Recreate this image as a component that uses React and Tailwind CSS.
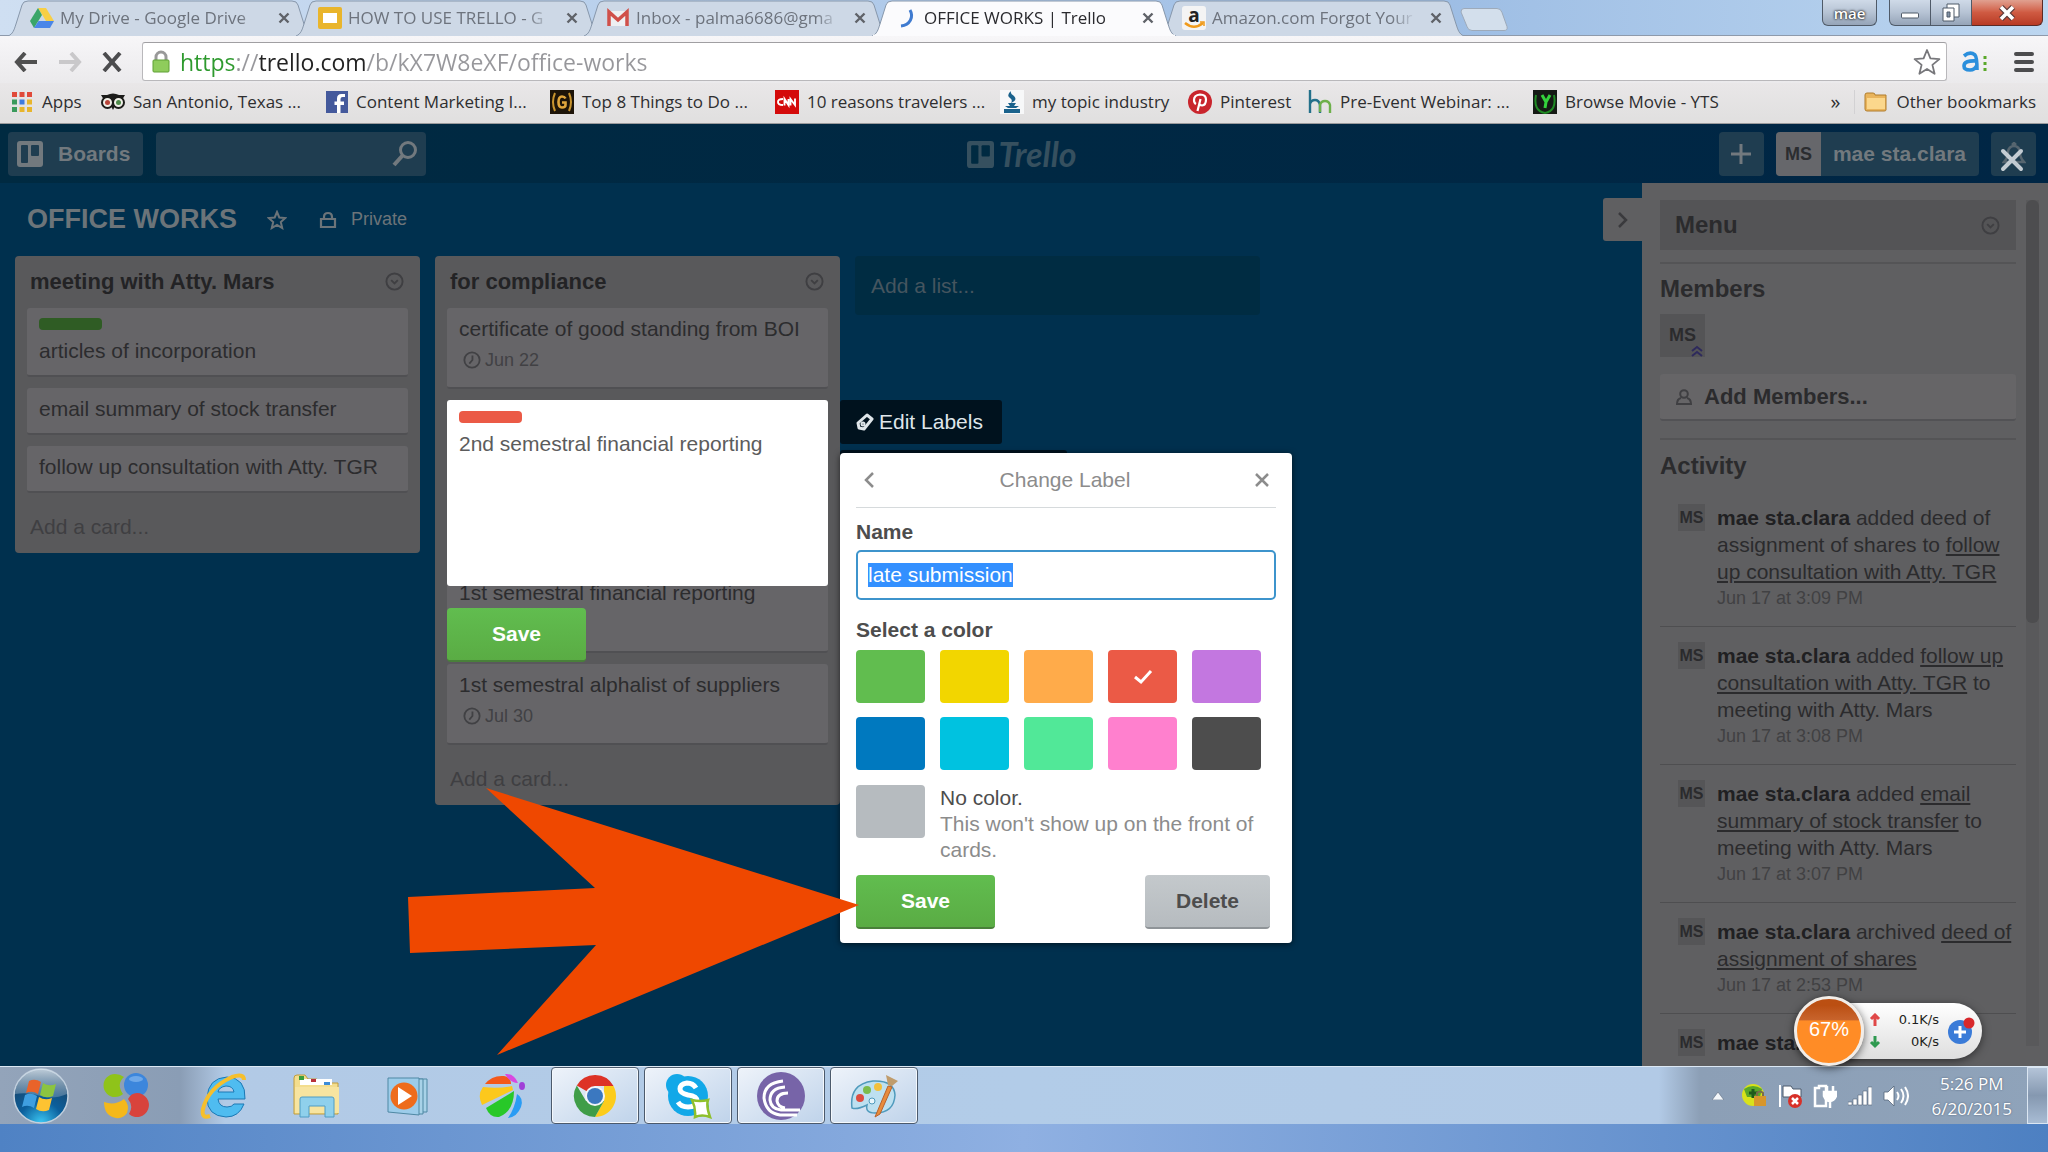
import React, { useEffect, useRef } from "react";

const uiFont = "font-['Open_Sans','Noto_Sans',sans-serif]";
const boardFont = "font-['Liberation_Sans',Arial,sans-serif]";

/* ---------- browser tab strip ---------- */

function DriveIcon() {
  return (
    <svg viewBox="0 0 24 24" className="size-6">
      <path d="M8 2h8l8 13h-8z" fill="#f8cf45" />
      <path d="M8 2l4 7-8 13-4-7z" fill="#3aa569" />
      <path d="M8.500 15H24l-4 7H4z" fill="#4a86e8" />
    </svg>
  );
}
function SlidesIcon() {
  return (
    <svg viewBox="0 0 24 24" className="size-6">
      <rect x="0" y="1" width="24" height="22" rx="2" fill="#e9b52c" />
      <rect x="5" y="7" width="14" height="10" fill="#fff" />
    </svg>
  );
}
function GmailIcon() {
  return (
    <svg viewBox="0 0 24 24" className="size-6">
      <path d="M2 5h20v15H2z" fill="#eef0f3" />
      <path d="M3 20V6l9 8 9-8v14" fill="none" stroke="#d0504a" strokeWidth="3.500" />
    </svg>
  );
}
function SpinnerIcon() {
  return (
    <svg viewBox="0 0 24 24" className="size-6">
      <path d="M16 4c4 7 0 15-9 16" fill="none" stroke="#3f7bd0" strokeWidth="3" />
    </svg>
  );
}
function AmazonIcon() {
  return (
    <svg viewBox="0 0 24 24" className="size-6">
      <rect width="24" height="24" rx="3" fill="#f4f4f4" />
      <text x="12" y="16" textAnchor="middle" fontSize="19" fontWeight="700" fontFamily="Open Sans, sans-serif" fill="#222">a</text>
      <path d="M3 17c6 5 12 5 18 0" fill="none" stroke="#f09a1a" strokeWidth="2.500" />
      <path d="M18 16h4v4" fill="none" stroke="#f09a1a" strokeWidth="1.500" />
    </svg>
  );
}

const tabs = [
  { title: "My Drive - Google Drive", Icon: DriveIcon },
  { title: "HOW TO USE TRELLO - G", Icon: SlidesIcon },
  { title: "Inbox - palma6686@gma", Icon: GmailIcon },
  { title: "OFFICE WORKS | Trello", Icon: SpinnerIcon, active: true },
  { title: "Amazon.com Forgot Your", Icon: AmazonIcon },
];

function Tab({ title, Icon, active }) {
  return (
    <div className={`relative -mr-4 flex h-9 w-[304px] shrink items-center pl-[22px] pr-[18px] ${active ? "z-10" : ""}`}>
      <svg className="absolute inset-0 size-full" viewBox="0 0 304 36" preserveAspectRatio="none" aria-hidden="true">
        <path
          d="M0 36C5 34 6 30 8 24L14 5Q15 1 20 1H284Q289 1 290 5L296 24C298 30 299 34 304 36"
          fill={active ? "#fbfbfd" : "#cdd8e6"}
          stroke="#8797ab"
        />
        {active && <path d="M1 36H303" stroke="#fbfbfd" strokeWidth="3" />}
      </svg>
      <span className="relative shrink-0"><Icon /></span>
      <span
        className={`relative ml-[6px] w-[204px] overflow-hidden whitespace-nowrap text-[17px] leading-6 [mask-image:linear-gradient(to_right,black_88%,transparent)] ${
          active ? "text-[#2a2a2e]" : "text-[#6d737d]"
        }`}
      >
        {title}
      </span>
      <button aria-label="Close tab" className="relative ml-auto p-1">
        <svg viewBox="0 0 12 12" className="size-3">
          <path d="M1.500 1.500l9 9M10.500 1.500l-9 9" stroke="#5f6268" strokeWidth="2.400" />
        </svg>
      </button>
    </div>
  );
}

function WindowControls() {
  const glass = "flex items-center justify-center border border-t-0 border-[#4f5a68] bg-linear-to-b from-[#cfdae8] via-[#b6c3d4] to-[#95a4b8]";
  return (
    <div className="ml-auto flex h-[26px] pr-[5px]">
      <button className={`${glass} mr-3 w-[55px] rounded-b-md text-[15px] font-semibold leading-5 text-white [text-shadow:0_0_3px_#222,0_0_2px_#222]`}>mae</button>
      <button aria-label="Minimize" className={`${glass} w-[42px] rounded-bl-md`}>
        <svg viewBox="0 0 20 20" className="size-5"><rect x="1.500" y="10" width="17" height="5" rx="1" fill="#fff" stroke="#4f5a68" /></svg>
      </button>
      <button aria-label="Restore" className={`${glass} w-[41px] border-l-0`}>
        <svg viewBox="0 0 20 20" className="size-5" fill="#fff" stroke="#4f5a68">
          <path d="M6 1h12v13H6z" /><path d="M2 5h11v13H2z" /><path d="M6 9h3v5H6z" fill="#8494a8" />
        </svg>
      </button>
      <button aria-label="Close" className="flex w-[71px] items-center justify-center rounded-br-md border border-l-0 border-t-0 border-[#5a2a26] bg-linear-to-b from-[#e0a090] via-[#cf5a42] to-[#b83a24]">
        <svg viewBox="0 0 20 20" className="size-5">
          <path d="M4 4l12 12M16 4L4 16" stroke="#5a3a3a" strokeWidth="6" /><path d="M4 4l12 12M16 4L4 16" stroke="#fff" strokeWidth="3.600" />
        </svg>
      </button>
    </div>
  );
}

function TabStrip() {
  return (
    <div className="flex h-9 shrink-0 border-b border-[#8e9aab] bg-linear-to-r from-[#cfdff2] via-[#9dbde4] via-70% to-[#bcd6f0] pl-[8px]">
      {tabs.map((t) => <Tab key={t.title} {...t} />)}
      <button aria-label="New tab" className="ml-3 mt-2 h-[23px] w-[50px] shrink-0">
        <svg viewBox="0 0 50 23" className="size-full">
          <path d="M4 .5H37q4 0 5 4l5 14q1 4-3 4H12q-4 0-5-4L1 4Q1 .5 4 .5z" fill="#d3dfec" stroke="#9daaba" />
        </svg>
      </button>
      <WindowControls />
    </div>
  );
}

/* ---------- toolbar and bookmarks ---------- */

function Toolbar() {
  return (
    <div className="flex h-[47px] shrink-0 items-center bg-linear-to-b from-[#f7f6f8] to-[#ebeaec] pt-1">
      <div className="flex w-[142px] items-center gap-5 pl-[14px]">
        <button aria-label="Back">
          <svg viewBox="0 0 24 20" className="h-5 w-6" fill="none" stroke="#505050" strokeWidth="4"><path d="M11 1L3 10l8 9M3 10h20" /></svg>
        </button>
        <button aria-label="Forward">
          <svg viewBox="0 0 24 20" className="h-5 w-6" fill="none" stroke="#c9c8ca" strokeWidth="4"><path d="M13 1l8 9-8 9M21 10H1" /></svg>
        </button>
        <button aria-label="Stop">
          <svg viewBox="0 0 20 20" className="size-5" stroke="#4c4c4e" strokeWidth="4"><path d="M2 1l16 18M18 1L2 19" /></svg>
        </button>
      </div>
      <div className="flex h-[39px] flex-1 items-center rounded-[3px] border border-[#b9b8bb] border-t-[#a09fa2] bg-white pl-[9px] pr-[5px]">
        <svg viewBox="0 0 18 24" className="h-6 w-[18px]">
          <path d="M4 12V7a5 5 0 0 1 10 0v5" fill="none" stroke="#999" strokeWidth="3" />
          <rect x="1" y="10" width="16" height="12" rx="1" fill="#8fcc5c" stroke="#5fa035" />
        </svg>
        <input
          aria-label="Address"
          defaultValue="https://trello.com/b/kX7W8eXF/office-works"
          className="ml-[10px] flex-1 bg-[linear-gradient(to_right,#2e9a2e_55px,#97979b_55px,#97979b_79px,#222_79px,#222_187px,#97979b_187px)] bg-clip-text text-[23px] leading-8 text-transparent outline-none"
        />
        <button aria-label="Bookmark this page">
          <svg viewBox="0 0 28 28" className="size-7" fill="#fff" stroke="#77777b" strokeWidth="1.800" strokeLinejoin="round">
            <path d="M14 2l3.400 8.400 9 .7-7 5.800 2.200 8.900L14 21l-7.600 4.800 2.200-8.900-7-5.800 9-.7z" />
          </svg>
        </button>
      </div>
      <button aria-label="Extension" className="ml-[14px]">
        <svg viewBox="0 0 28 24" className="h-6 w-7">
          <path d="M3 6q6-5 11-1 2 2 2 15M16 11q-13-1-13 5 0 4 6 4 5 0 7-5" fill="none" stroke="#2b8fdc" strokeWidth="3.600" />
          <path d="M24 6v3M24 12v3M24 18v3" stroke="#5aa82a" strokeWidth="3" />
        </svg>
      </button>
      <button aria-label="Chrome menu" className="ml-[25px] mr-[14px]">
        <svg viewBox="0 0 20 20" className="size-5" stroke="#4c4c4e" strokeWidth="4" strokeLinecap="round"><path d="M2 2h16M2 10h16M2 18h16" /></svg>
      </button>
    </div>
  );
}

function AppsIcon() {
  const rows = [["#e04a3a", "#e04a3a", "#e04a3a"], ["#3a9a5c", "#3f7be0", "#e8b52c"], ["#3a9a5c", "#e8b52c", "#e8b52c"]];
  return (
    <svg viewBox="0 0 20 20" className="size-5">
      {rows.map((r, y) => r.map((c, x) => <rect key={`${x}${y}`} x={x * 7.500} y={y * 7.500} width="5" height="5" fill={c} />))}
    </svg>
  );
}
function OwlIcon() {
  return (
    <svg viewBox="0 0 24 20" className="h-5 w-6">
      <path d="M0 3h6q6-3 12 0h6l-3 5H3z" fill="#1c1c1a" />
      <circle cx="6.500" cy="10.500" r="5.500" fill="#f0efe8" stroke="#1c1c1a" strokeWidth="2" />
      <circle cx="17.500" cy="10.500" r="5.500" fill="#f0efe8" stroke="#1c1c1a" strokeWidth="2" />
      <circle cx="6.500" cy="10.500" r="2.500" fill="#b8443a" /><circle cx="17.500" cy="10.500" r="2.500" fill="#4d8a4a" />
      <path d="M10 14l2 4 2-4z" fill="#1c1c1a" />
    </svg>
  );
}
function FacebookIcon() {
  return (
    <svg viewBox="0 0 22 22" className="size-[22px]">
      <rect width="22" height="22" fill="#44599c" />
      <path d="M14.500 22v-8h3.500V10.500h-3.500V8q0-2 2-2H19V3h-3.500Q11 3 11 7.500v3H8.500V14H11v8z" fill="#fff" />
    </svg>
  );
}
function GIcon() {
  return (
    <svg viewBox="0 0 24 24" className="size-6">
      <rect width="24" height="24" fill="#1d1408" />
      <path d="M5 3q-4 9 0 18M19 3q4 9 0 18" fill="none" stroke="#c8942e" strokeWidth="2" />
      <path d="M15.500 8.500q-1-2-3.500-2-3.500 0-3.500 5.500t3.500 5.500q3.500 0 3.500-2.500V12.500H12" fill="none" stroke="#e0a63c" strokeWidth="2.600" />
    </svg>
  );
}
function CnnIcon() {
  return (
    <svg viewBox="0 0 24 24" className="size-6">
      <rect width="24" height="24" fill="#d40a0a" />
      <path d="M8 9q-5 0-5 3t5 3M9.500 15.500V9l4 6V9M15.500 15.500V9l4.500 6V8.500" fill="none" stroke="#fff" strokeWidth="1.900" />
    </svg>
  );
}
function BbbIcon() {
  return (
    <svg viewBox="0 0 24 24" className="size-6">
      <rect width="24" height="24" fill="#f7f8f9" />
      <path d="M11 1q-5 4-1 7 3 2 1 5 7-3 3-7-4-2-3-5zM8 13h8l-2 3h-4zM5 16h14l-3 2H8zM4 19h16v4H4z" fill="#1a628c" />
    </svg>
  );
}
function PinterestIcon() {
  return (
    <svg viewBox="0 0 24 24" className="size-6">
      <circle cx="12" cy="12" r="12" fill="#c9252d" />
      <path d="M8 14q-2-1-2-4 0-5 6-5.500 6 0 6 5 0 5.500-4 6-2 0-3-2M12.500 9L9.500 21" fill="none" stroke="#fff" strokeWidth="2.200" />
    </svg>
  );
}
function HnIcon() {
  return (
    <svg viewBox="0 0 24 24" className="size-6" fill="none" strokeWidth="2.400">
      <path d="M2 0v23M2 14q1-4 5-4t5 5v8" stroke="#23708a" /><path d="M12 22v-7q1-4 5-4t5 4v8" stroke="#6db04a" />
    </svg>
  );
}
function YtsIcon() {
  return (
    <svg viewBox="0 0 24 24" className="size-6">
      <rect width="24" height="24" fill="#151a15" />
      <path d="M3 5q-3 16 9 18 12-2 9-18" fill="none" stroke="#1f8a24" strokeWidth="2" />
      <path d="M9 5l4 7 4-7M13 12l-1 6" fill="none" stroke="#33d23c" strokeWidth="3" />
    </svg>
  );
}

const bookmarks = [
  { label: "Apps", Icon: AppsIcon, width: "w-[89px]", gap: "gap-[10px]" },
  { label: "San Antonio, Texas ...", Icon: OwlIcon, width: "w-[225px]", gap: "gap-2" },
  { label: "Content Marketing I...", Icon: FacebookIcon, width: "w-[224px]", gap: "gap-2" },
  { label: "Top 8 Things to Do ...", Icon: GIcon, width: "w-[225px]", gap: "gap-2" },
  { label: "10 reasons travelers ...", Icon: CnnIcon, width: "w-[225px]", gap: "gap-2" },
  { label: "my topic industry", Icon: BbbIcon, width: "w-[188px]", gap: "gap-2" },
  { label: "Pinterest", Icon: PinterestIcon, width: "w-[120px]", gap: "gap-2" },
  { label: "Pre-Event Webinar: ...", Icon: HnIcon, width: "w-[225px]", gap: "gap-2" },
  { label: "Browse Movie - YTS", Icon: YtsIcon, width: "w-[200px]", gap: "gap-2" },
];

function BookmarksBar() {
  return (
    <div className="flex h-[41px] shrink-0 items-center border-b border-[#9a9a9c] bg-linear-to-b from-[#e9e7e8] to-[#e0dfdf] pb-[2px] pl-3 text-[17px] leading-6 text-[#2e2e30]">
      {bookmarks.map(({ label, Icon, width, gap }) => (
        <a key={label} href="#" className={`flex items-center whitespace-nowrap ${width} ${gap}`}>
          <span className="shrink-0"><Icon /></span>
          {label}
        </a>
      ))}
      <button aria-label="More bookmarks" className="ml-auto mr-[14px] text-[20px] leading-6">»</button>
      <a href="#" className="flex items-center gap-2 whitespace-nowrap border-l border-[#d2d1d3] pl-[9px] pr-3">
        <svg viewBox="0 0 24 20" className="h-5 w-6">
          <path d="M1 3q0-2 2-2h6q2 0 2 2h11v15q0 1-2 1H3q-2 0-2-2z" fill="#e9b45c" stroke="#b07d2c" />
          <path d="M3 6h18v11H3z" fill="#fbd78c" />
        </svg>
        Other bookmarks
      </a>
    </div>
  );
}

/* ---------- Trello ---------- */

function BoardGlyph({ className, hole }) {
  return (
    <svg viewBox="0 0 26 26" className={className}>
      <rect width="26" height="26" rx="3" fill="currentColor" />
      <rect x="4" y="4" width="7" height="18" rx="1" fill={hole} />
      <rect x="14" y="4" width="8" height="11" rx="1" fill={hole} />
    </svg>
  );
}

function TrelloHeader() {
  const box = "h-11 rounded-sm bg-[#1f3d50]";
  return (
    <header className={`relative flex h-[59px] shrink-0 items-start bg-linear-to-r from-[#002a41] to-[#002645] px-2 pr-3 pt-2 text-[#72797e] ${boardFont}`}>
      <div className="flex flex-1">
        <button className={`${box} flex w-[135px] items-center gap-[15px] pl-[9px] text-[21px] font-bold`}>
          <BoardGlyph className="size-[26px]" hole="#1f3d50" />
          Boards
        </button>
        <label className={`${box} ml-[13px] flex w-[270px] items-center pr-2`}>
          <input aria-label="Search" className="min-w-0 flex-1 bg-transparent pl-2 outline-none" />
          <svg viewBox="0 0 26 26" className="size-[26px]" fill="none" stroke="currentColor">
            <circle cx="16" cy="9" r="7.500" strokeWidth="3" /><path d="M11 14L2 24" strokeWidth="4" />
          </svg>
        </label>
      </div>
      <a href="#" className="flex h-11 items-center gap-1 text-[#36505f]">
        <BoardGlyph className="size-[27px]" hole="#002a41" />
        <span className="font-['Lato',sans-serif] text-[34px] font-bold italic leading-9">Trello</span>
      </a>
      <div className="flex flex-1 justify-end">
        <button aria-label="Create" className={`${box} mr-3 flex w-[45px] items-center justify-center`}>
          <svg viewBox="0 0 22 22" className="size-[22px]" stroke="currentColor" strokeWidth="3"><path d="M11 1v20M1 11h20" /></svg>
        </button>
        <button className={`${box} mr-3 flex items-center overflow-hidden pr-[13px] text-[21px] font-bold`}>
          <span className="mr-[12px] flex h-11 w-[45px] items-center justify-center bg-[#66676b] text-[18px] text-[#2b2d30]">MS</span>
          mae sta.clara
        </button>
        <button aria-label="Notifications" className={`${box} flex w-[45px] items-center justify-center`}>
          <svg viewBox="0 0 24 24" className="size-6" fill="none" stroke="#56656f" strokeWidth="2.500"><path d="M2 20q4-4 4-10a6 6 0 0 1 12 0q0 6 4 10zM10 3l2-2 2 2" /></svg>
        </button>
      </div>
      <button aria-label="Close editor" className="absolute right-[24px] top-6">
        <svg viewBox="0 0 24 24" className="size-6" stroke="#c3cbd2" strokeWidth="4" strokeLinecap="round"><path d="M3 3l18 18M21 3L3 21" /></svg>
      </button>
    </header>
  );
}

function ChevronCircle() {
  return (
    <svg viewBox="0 0 20 20" className="size-[19px]" fill="none" stroke="#3f3f42" strokeWidth="2">
      <circle cx="10" cy="10" r="8.500" /><path d="M6.500 8.500L10 12l3.500-3.500" />
    </svg>
  );
}

function Card({ title, label, date, children }) {
  return (
    <article className="rounded-[3px] border-b-2 border-[#505053] bg-[#666568] px-3 pb-[11px] pt-[7px] text-[21px] leading-[27px] text-[#2c2c2e]">
      {label && <div className={`mb-[7px] mt-[3px] h-3 w-[63px] rounded ${label}`} />}
      <div className="whitespace-nowrap">{title}</div>
      {date && (
        <div className="flex h-[34px] items-center gap-1 pl-1 pt-[2px] text-[18px] text-[#414144]">
          <svg viewBox="0 0 20 20" className="size-[18px]" fill="none" stroke="currentColor" strokeWidth="2">
            <circle cx="10" cy="10" r="8.500" /><path d="M10.500 5v5L7 14" />
          </svg>
          {date}
        </div>
      )}
      {children}
    </article>
  );
}

function List({ name, children }) {
  return (
    <section className="w-[405px] shrink-0 rounded-[4px] bg-[#59595b] px-3">
      <h2 className="flex h-[52px] items-center justify-between pb-[2px] pl-[3px] pr-1 text-[22px] font-bold text-[#232325]">
        {name}
        <button aria-label={`${name} list menu`}><ChevronCircle /></button>
      </h2>
      <div className="flex flex-col gap-[11px]">{children}</div>
      <button className="flex h-[60px] items-center pl-[3px] pt-2 text-[21px] text-[#3f3f42]">Add a card...</button>
    </section>
  );
}

const greenButton = "rounded-[4px] border-b-2 border-[#49803a] bg-linear-to-b from-[#61bd4f] to-[#5aac44] text-[21px] font-bold text-white";

const swatches = [
  ["Green", "bg-[#61bd4f]"], ["Yellow", "bg-[#f2d600]"], ["Orange", "bg-[#ffab4a]"], ["Red", "bg-[#eb5a46]"], ["Purple", "bg-[#c377e0]"],
  ["Blue", "bg-[#0079bf]"], ["Sky", "bg-[#00c2e0]"], ["Lime", "bg-[#51e898]"], ["Pink", "bg-[#ff80ce]"], ["Black", "bg-[#4d4d4d]"],
];

function ChangeLabel() {
  const input = useRef(null);
  useEffect(() => {
    input.current.focus();
    input.current.select();
  }, []);
  return (
    <div role="dialog" aria-label="Change Label" className="absolute left-[393px] top-[53px] z-20 w-[452px] rounded-[4px] bg-white px-4 pb-[14px] text-[21px] leading-[26px] text-[#4d4d4d] shadow-[0_1px_6px_rgba(0,0,0,0.6)]">
      <div className="flex h-[55px] items-center justify-between border-b border-[#d6dadc] px-[7px] text-[#8c8c8c]">
        <button aria-label="Back">
          <svg viewBox="0 0 12 16" className="h-4 w-3" fill="none" stroke="currentColor" strokeWidth="2.500"><path d="M10 1L3 8l7 7" /></svg>
        </button>
        <span>Change Label</span>
        <button aria-label="Close">
          <svg viewBox="0 0 14 14" className="size-[14px]" stroke="currentColor" strokeWidth="2.500"><path d="M1 1l12 12M13 1L1 13" /></svg>
        </button>
      </div>
      <label htmlFor="label-name" className="mt-[11px] block font-bold">Name</label>
      <input
        id="label-name"
        ref={input}
        defaultValue="late submission"
        className="mt-[5px] block h-[50px] w-full rounded-[5px] border-2 border-[#3d94cc] px-[10px] text-[21px] outline-none selection:bg-[#3390ff] selection:text-white"
      />
      <div className="mb-[7px] mt-[17px] font-bold">Select a color</div>
      <div className="grid w-[405px] grid-cols-5 gap-x-[15px] gap-y-[14px]">
        {swatches.map(([name, color]) => (
          <button key={name} aria-label={name} aria-pressed={name === "Red"} className={`flex h-[53px] items-center justify-center rounded-[4px] ${color}`}>
            {name === "Red" && (
              <svg viewBox="0 0 20 16" className="h-4 w-5" fill="none" stroke="#fff" strokeWidth="3"><path d="M2 8l6 5L18 2" /></svg>
            )}
          </button>
        ))}
      </div>
      <div className="mt-[15px] flex gap-[15px]">
        <button aria-label="No color" className="h-[53px] w-[69px] shrink-0 rounded-[4px] bg-[#b6bbbf]" />
        <div>
          <div>No color.</div>
          <div className="text-[#8c8c8c]">This won't show up on the front of cards.</div>
        </div>
      </div>
      <div className="mt-3 flex justify-between pr-[6px]">
        <button className={`h-[54px] w-[139px] ${greenButton}`}>Save</button>
        <button className="h-[54px] w-[125px] rounded-[4px] border-b-2 border-[#8f9498] bg-linear-to-b from-[#c4c9cc] to-[#b6bbbf] text-[21px] font-bold text-[#4d4d4d]">Delete</button>
      </div>
      <svg viewBox="0 0 452 268" className="pointer-events-none absolute -left-[432px] top-[335px] h-[268px] w-[452px]" aria-hidden="true">
        <path d="M451 117L78 0L187 100L0 109L2 165L188 157L89 267z" fill="#ef4800" />
      </svg>
    </div>
  );
}

function QuickEdit() {
  return (
    <div className="relative h-[161px]">
      <div className="absolute inset-x-0 top-0 z-10 h-[186px] rounded-[3px] bg-white px-3 pt-[11px]">
        <div className="h-3 w-[63px] rounded bg-[#eb5a46]" />
        <textarea
          aria-label="Card title"
          defaultValue="2nd semestral financial reporting"
          className="mt-[7px] block h-[140px] w-full resize-none bg-transparent text-[21px] leading-[27px] text-[#5c5c5c] outline-none"
        />
      </div>
      <button className={`absolute left-0 top-[208px] z-10 h-[54px] w-[139px] ${greenButton}`}>Save</button>
      <button className="absolute left-[393px] top-0 z-10 flex h-11 w-[162px] items-center gap-[5px] rounded-[3px] bg-[#00121e] pl-4 text-[21px] text-[#dfe6ea]">
        <svg viewBox="0 0 18 18" className="size-[18px]" fill="none" stroke="currentColor" strokeWidth="3"><path d="M2 10L11 2l5 4-8 10-5-1z" strokeLinejoin="round" /><circle cx="7" cy="11" r="1" /></svg>
        Edit Labels
      </button>
      <div className="absolute left-[393px] top-[50px] h-11 w-[227px] rounded-[3px] bg-[#00121e]" />
      <ChangeLabel />
    </div>
  );
}

function Board() {
  return (
    <div className="min-w-0 flex-1">
      <div className="flex h-[73px] items-center pl-[27px] text-[#6c7479]">
        <h1 className="text-[27px] font-bold">OFFICE WORKS</h1>
        <button aria-label="Star board" className="ml-[30px]">
          <svg viewBox="0 0 20 20" className="size-5" fill="none" stroke="currentColor" strokeWidth="2"><path d="M10 2l2.300 5.500 6 .5-4.500 4 1.400 6L10 14.800 4.800 18l1.400-6L1.700 8l6-.5z" /></svg>
        </button>
        <button className="ml-8 flex items-center gap-[14px] text-[18px]">
          <svg viewBox="0 0 18 18" className="size-[18px]" fill="none" stroke="currentColor" strokeWidth="2.200"><path d="M2 8h14v8H2zM5 8V6q0-4 4-4t4 4v2" /></svg>
          Private
        </button>
      </div>
      <div className="flex items-start gap-[15px] pl-[15px]">
        <List name="meeting with Atty. Mars">
          <Card label="bg-[#2f5c24]" title="articles of incorporation" />
          <Card title="email summary of stock transfer" />
          <Card title="follow up consultation with Atty. TGR" />
        </List>
        <List name="for compliance">
          <Card title="certificate of good standing from BOI" date="Jun 22" />
          <QuickEdit />
          <Card title="1st semestral financial reporting"><div className="h-[34px]" /></Card>
          <Card title="1st semestral alphalist of suppliers" date="Jul 30" />
        </List>
        <button className="h-[59px] w-[405px] shrink-0 rounded-[4px] bg-[#002c42] pl-4 text-left text-[21px] text-[#45555f]">Add a list...</button>
      </div>
    </div>
  );
}

const activity = [
  { text: [" added deed of assignment of shares to ", "follow up consultation with Atty. TGR", ""], time: "Jun 17 at 3:09 PM" },
  { text: [" added ", "follow up consultation with Atty. TGR", " to meeting with Atty. Mars"], time: "Jun 17 at 3:08 PM" },
  { text: [" added ", "email summary of stock transfer", " to meeting with Atty. Mars"], time: "Jun 17 at 3:07 PM" },
  { text: [" archived ", "deed of assignment of shares", ""], time: "Jun 17 at 2:53 PM" },
  { text: ["", "", ""], time: "" },
];

function Sidebar() {
  return (
    <>
      <button aria-label="Hide menu" className="mt-[15px] flex h-[43px] w-[39px] shrink-0 items-center justify-center self-start rounded-l-[3px] bg-[#5f5f61]">
        <svg viewBox="0 0 12 16" className="h-4 w-3" fill="none" stroke="#3a3a3d" strokeWidth="2.500"><path d="M2 1l7 7-7 7" /></svg>
      </button>
      <aside className="flex w-[406px] shrink-0 overflow-hidden bg-[#5f5f61] pl-[18px] text-[#2b2b2d]">
        <div className="w-[356px] shrink-0 pt-[17px]">
          <div className="flex h-[50px] items-center justify-between bg-[#545456] pl-[15px] pr-4 text-[24px] font-bold">
            Menu
            <button aria-label="Menu options"><ChevronCircle /></button>
          </div>
          <div className="mt-3 border-t-2 border-[#545456]" />
          <h3 className="mt-[9px] text-[24px] font-bold leading-8">Members</h3>
          <div className="relative mt-[9px] flex h-[43px] w-[45px] items-center justify-center bg-[#545456] text-[18px] font-bold">
            MS
            <svg viewBox="0 0 12 12" className="absolute bottom-0 right-[2px] size-3" fill="none" stroke="#2e2a5c" strokeWidth="2"><path d="M1 6l5-4 5 4M1 11l5-4 5 4" /></svg>
          </div>
          <button className="mt-[17px] flex h-[47px] w-full items-center gap-3 rounded-[3px] border-b-2 border-[#525255] bg-[#666567] pl-4 text-[22px] font-bold">
            <svg viewBox="0 0 16 16" className="size-4" fill="none" stroke="#3f3f42" strokeWidth="2"><circle cx="8" cy="5" r="3.800" /><path d="M5 9q-4 1-4 6h14q0-5-4-6" /></svg>
            Add Members...
          </button>
          <div className="mt-[17px] border-t-2 border-[#545456]" />
          <h3 className="mt-[10px] text-[24px] font-bold leading-8">Activity</h3>
          <ul className="mt-[7px]">
            {activity.map((a) => (
              <li key={a.time} className="flex border-b border-[#4e4e50] pb-[14px] pl-[18px] pt-[15px] text-[21px] leading-[27px] last:border-b-0">
                <span className="mr-3 flex size-[27px] shrink-0 items-center justify-center bg-[#555557] text-[16px] font-bold">MS</span>
                <div className="-mr-1">
                  <b className="text-[#202022]">mae sta.clara</b>
                  {a.text[0]}
                  {a.text[1] && <a href="#" className="underline underline-offset-2">{a.text[1]}</a>}
                  {a.text[2]}
                  {a.time && <div className="text-[18px] text-[#414143]">{a.time}</div>}
                </div>
              </li>
            ))}
          </ul>
        </div>
        <div className="mb-5 ml-[10px] mt-[17px] w-[13px] bg-[#59595b]">
          <div className="h-1/2 w-full rounded-md bg-[#4d4d4f]" />
        </div>
      </aside>
    </>
  );
}

/* ---------- desktop ---------- */

function SpeedWidget() {
  return (
    <div className="absolute bottom-[86px] right-[66px] z-30 flex items-center">
      <div className="relative z-10 flex size-[70px] items-center justify-center rounded-full border-[3px] border-[#f2ede8] bg-linear-to-b from-[#bb4f12] from-10% via-[#c8642c] via-33% to-[#ff8c26] to-34% pb-1 text-[20px] text-white shadow-[0_2px_8px_rgba(0,0,0,0.6)] font-['Liberation_Sans',sans-serif]">67%</div>
      <div className="-ml-9 flex h-[56px] w-[154px] items-center rounded-r-full bg-linear-to-b from-white to-[#dedede] pl-[41px] pr-[7px] font-['DejaVu_Sans',sans-serif] text-[13px] leading-[22px] text-[#1e1e20] shadow-[0_2px_8px_rgba(0,0,0,0.5)]">
        <svg viewBox="0 0 12 36" className="h-9 w-3" fill="none" strokeWidth="3">
          <path d="M6 13V3M2 6l4-4 4 4" stroke="#e04848" /><path d="M6 23v9M2 29l4 4 4-4" stroke="#2f9a50" />
        </svg>
        <div className="flex-1 text-right"><div>0.1K/s</div><div>0K/s</div></div>
        <svg viewBox="0 0 28 28" className="ml-2 size-7 shrink-0">
          <circle cx="13" cy="15" r="12" fill="#3a7bd8" /><path d="M13 9v12M7 15h12" stroke="#fff" strokeWidth="3" /><circle cx="22" cy="6" r="5.500" fill="#d8282c" />
        </svg>
      </div>
    </div>
  );
}

function StartOrb() {
  return (
    <svg viewBox="0 0 56 56" className="size-14">
      <defs>
        <radialGradient id="orb" cx=".5" cy="1" r=".9"><stop offset="0" stopColor="#3cc8f4" /><stop offset=".45" stopColor="#0b5f9c" /><stop offset="1" stopColor="#1b4164" /></radialGradient>
        <linearGradient id="orbShine" x1="0" y1="0" x2="0" y2="1"><stop offset="0" stopColor="#dbe6ef" stopOpacity=".85" /><stop offset="1" stopColor="#9db4c8" stopOpacity=".35" /></linearGradient>
      </defs>
      <circle cx="28" cy="28" r="27" fill="url(#orb)" stroke="#c2d0de" strokeWidth="1.500" />
      <path d="M2 26a26 25 0 0 1 52 0Q40 32 28 28 16 24 2 26z" fill="url(#orbShine)" />
      <path d="M16 13q6-3 12 1l-3 12q-6-4-12-1z" fill="#e9632a" />
      <path d="M30 15q6 4 13 1l-3 12q-7 3-13-1z" fill="#8cc440" />
      <path d="M12 27q6-3 12 1l-3 12q-6-4-12-1z" fill="#3f9fe0" />
      <path d="M26 29q6 4 13 1l-3 12q-7 3-13-1z" fill="#fdc332" />
    </svg>
  );
}
function PetalsIcon() {
  return (
    <svg viewBox="0 0 46 46" className="size-[46px]">
      <path d="M12 1a11 11 0 0 0 0 23q5 0 8-3-7-10 1-17-4-3-9-3z" fill="#8fc31a" />
      <circle cx="33" cy="12" r="12" fill="#3c86dc" />
      <path d="M1 29q11 4 20-3 6 6 3 14-4 6-11 5Q1 43 1 29z" fill="#f5b81a" />
      <path d="M34 20a12 12 0 1 1-8 21q5-8-1-15 3-6 9-6z" fill="#d8433c" />
      <ellipse cx="33" cy="6" rx="7" ry="3" fill="#8fc0f2" opacity=".6" />
    </svg>
  );
}
function IeIcon() {
  return (
    <svg viewBox="0 0 48 48" className="size-12">
      <path d="M45 27H18q1 8 9 8 5 0 7-3h10q-5 13-18 13Q7 44 7 26 8 6 27 5q19 1 18 22zM18 20h16q-1-6-8-6-7 1-8 6z" fill="#4fbcf0" stroke="#1c78b4" />
      <path d="M44 8Q44 1 32 5 8 16 3 37 1 47 10 44" fill="none" stroke="#f6bf2c" strokeWidth="4" />
    </svg>
  );
}
function ExplorerIcon() {
  return (
    <svg viewBox="0 0 50 46" className="h-[46px] w-[50px]">
      <path d="M2 5q0-3 3-3h8l3 4h9l3 4h18v31H2z" fill="#f3dd8e" stroke="#c09c3c" />
      <path d="M8 6h32v6H8z" fill="#fff" /><path d="M7 3h5v4H7z" fill="#3a9e3c" /><path d="M19 6h5v3h-5z" fill="#b8303a" /><path d="M32 9h6v3h-6z" fill="#3c8cd8" />
      <path d="M3 14h44v26H3z" fill="#f7e4a0" />
      <path d="M8 26q0-2 2-2h30q2 0 2 2v18h-9V33H17v11H8z" fill="#8fd0ec" stroke="#4f9cc4" />
    </svg>
  );
}
function MediaIcon() {
  return (
    <svg viewBox="0 0 44 40" className="h-10 w-11">
      <path d="M32 3h8v33h-8z" fill="#a8d2e8" stroke="#4f88a4" /><path d="M30 3h6v35h-6z" fill="#a8d2e8" stroke="#4f88a4" />
      <path d="M1 2h31v37L1 36z" fill="#9cccea" stroke="#4f88a4" />
      <circle cx="17" cy="20" r="13.500" fill="#ee6c1c" /><path d="M11 11l14 9-14 9z" fill="#fff" />
    </svg>
  );
}
function BallIcon() {
  return (
    <svg viewBox="0 0 48 48" className="size-12">
      <path d="M7 12Q14 3 26 4q7 1 7 8z" fill="#f4581a" />
      <path d="M5 15q15 2 29-1l1 4L4 33q-5-10 1-18z" fill="#fcc81c" />
      <path d="M8 36l28-17q0 20-15 26-9 1-13-9z" fill="#28c828" />
      <path d="M39 22q7 4 4 13-4 10-13 11 7-10 9-24z" fill="#2a9cf4" />
      <path d="M27 2q9-1 13 9-8 0-13-9z" fill="#d848e0" /><ellipse cx="44" cy="14" rx="3" ry="4" fill="#a040d8" />
    </svg>
  );
}
function ChromeIcon() {
  return (
    <svg viewBox="0 0 44 44" className="size-11">
      <path d="M22 22L3.800 11.500A21 21 0 0 1 40.500 12H22z" fill="#dd3226" />
      <path d="M40.500 12A21 21 0 0 1 22 43l9-16V12z" fill="#fccc1c" />
      <path d="M3.800 11.500A21 21 0 0 0 22 43l9-16H13z" fill="#3f9d48" />
      <circle cx="22" cy="22" r="10" fill="#f2f5f8" /><circle cx="22" cy="22" r="8" fill="#3b78c0" />
    </svg>
  );
}
function SkypeIcon() {
  return (
    <svg viewBox="0 0 48 48" className="size-12">
      <circle cx="24" cy="24" r="20" fill="#12a8e8" /><circle cx="13" cy="13" r="11" fill="#12a8e8" /><circle cx="35" cy="35" r="10" fill="#12a8e8" />
      <path d="M32 16q-3-5-9-5-7 1-7 6 0 4 8 6 9 1 9 6-1 6-9 6-7 0-10-5" fill="none" stroke="#fff" strokeWidth="5" />
      <path d="M28 28q8 2 16 0-2 6 2 17-8-3-15 0 1-9-3-17z" fill="#fff" stroke="#8fc02c" strokeWidth="2.500" />
    </svg>
  );
}
function TorrentIcon() {
  return (
    <svg viewBox="0 0 48 48" className="size-12">
      <circle cx="24" cy="24" r="24" fill="#7764a8" />
      <path d="M26 9Q7 11 7 26q2 15 16 17h17M28 15q-15 1-15 13 1 9 11 10h19M31 21q-11 0-11 8 1 6 8 7" fill="none" stroke="#fff" strokeWidth="3" />
    </svg>
  );
}
function PaintIcon() {
  return (
    <svg viewBox="0 0 48 48" className="size-12">
      <path d="M23 9q21-1 22 14-1 18-20 18-10 0-8-8Q7 38 2 36-1 12 23 9z" fill="#bde0f0" stroke="#4f9abc" strokeWidth="1.500" />
      <circle cx="17" cy="18" r="4" fill="#7cbc4c" /><circle cx="28" cy="15" r="4" fill="#f2c03c" /><circle cx="10" cy="26" r="4" fill="#dc4c40" /><circle cx="22" cy="29" r="3" fill="#e8f6fc" stroke="#4f9abc" />
      <path d="M38 14L25 45l5-3L42 15z" fill="#e88c3c" stroke="#b8622c" /><path d="M36 3l12 6-6 5-4-1z" fill="#c09c6c" />
    </svg>
  );
}

const pinned = [
  ["Start", StartOrb, "w-[82px]"],
  ["Petals", PetalsIcon, "w-[88px]"],
  ["Internet Explorer", IeIcon, "w-[108px]"],
  ["Explorer", ExplorerIcon, "w-[77px]"],
  ["Media Player", MediaIcon, "w-[108px]"],
  ["Ball", BallIcon, "w-[78px]"],
];
const running = [["Google Chrome", ChromeIcon], ["Skype", SkypeIcon], ["BitTorrent", TorrentIcon], ["Paint", PaintIcon]];

function Tray() {
  return (
    <div className="ml-auto flex items-center text-white">
      <svg viewBox="0 0 12 8" className="mr-[17px] h-2 w-3"><path d="M6 0l6 8H0z" fill="#f4f7fa" stroke="#5c6c80" strokeWidth=".6" /></svg>
      <svg viewBox="0 0 26 26" className="mr-[10px] size-[26px]">
        <circle cx="12" cy="12" r="11" fill="#d8e21c" /><path d="M3 6q9-6 18 0l-2 8H6z" fill="#5aa828" /><path d="M12 6v9M8 10h9" stroke="#1f5a1c" strokeWidth="3" /><rect x="13" y="13" width="12" height="10" fill="#d8962c" /><path d="M16 13v-3q3-3 6 0v3" fill="none" stroke="#7c6a4c" strokeWidth="2" />
      </svg>
      <svg viewBox="0 0 26 26" className="mr-[10px] size-[26px]">
        <path d="M3 2v22M6 3h8l2 3h8v8H6z" fill="#fff" stroke="#4c5a6c" strokeWidth="1" /><path d="M3 2v22" stroke="#fff" strokeWidth="2" /><circle cx="18" cy="18" r="7" fill="#d83028" /><path d="M15 15l6 6M21 15l-6 6" stroke="#fff" strokeWidth="2.500" />
      </svg>
      <svg viewBox="0 0 24 26" className="mr-[11px] h-[26px] w-6">
        <path d="M2 5h4V3h7v20H2z" fill="#94a4b8" stroke="#fff" strokeWidth="2.500" /><path d="M11 9h12v4q-2 5-6 5t-6-5zM14 3v6M20 3v6M17 18v7" fill="#fff" stroke="#fff" strokeWidth="2.500" />
      </svg>
      <svg viewBox="0 0 24 20" className="mr-[11px] h-5 w-6" fill="#fff" stroke="#54647a" strokeWidth=".6">
        <path d="M0 16h4v3H0zM5 13h4v6H5zM10 9h4v10h-4zM15 5h4v14h-4zM20 1h4v18h-4z" />
      </svg>
      <svg viewBox="0 0 26 22" className="h-[22px] w-[26px]" fill="none" stroke="#fff" strokeWidth="2">
        <path d="M1 7h4l6-6v20l-6-6H1z" fill="#fff" stroke="#54647a" strokeWidth=".8" /><path d="M14 7q3 4 0 8M18 4q5 7 0 14M22 2q6 9 0 18" />
      </svg>
      <div className="ml-[22px] mr-[15px] text-center text-[17px] leading-[25px] [text-shadow:0_0_2px_#4a5a70]"><div>5:26 PM</div><div>6/20/2015</div></div>
      <button aria-label="Show desktop" className="h-[57px] w-[21px] border border-[#dbe6f2] bg-linear-to-b from-[#b4c4d8] via-[#8598b0] to-[#a8bcd4]" />
    </div>
  );
}

function Taskbar() {
  return (
    <footer className="shrink-0">
      <div className="flex h-[58px] items-center border-t border-[#dce8f4] bg-[linear-gradient(to_right,#93a4ba_0,#8a9db5_180px,#b2cae6_225px,#b2cce8_50%,#b2cae6_81%,#8c9fb6_83%,#8fa3ba)]">
        {pinned.map(([name, Icon, width]) => (
          <button key={name} aria-label={name} className={`flex shrink-0 items-center justify-center ${width}`}><Icon /></button>
        ))}
        <div className="ml-[10px] flex gap-[5px]">
          {running.map(([name, Icon]) => (
            <button key={name} aria-label={name} className="flex h-[57px] w-[88px] items-center justify-center rounded-[4px] border border-[#4c5a6c] bg-linear-to-br from-[#eef3fa] to-[#bfd3ea] shadow-[inset_0_0_0_1px_#f4f8fc]"><Icon /></button>
          ))}
        </div>
        <Tray />
      </div>
      <div className="h-7 bg-linear-to-r from-[#4f82c4] via-[#8fb0e2] to-[#4d80c2]" />
    </footer>
  );
}

export default function App() {
  return (
    <div className={`relative flex h-screen flex-col overflow-hidden ${uiFont}`}>
      <TabStrip />
      <Toolbar />
      <BookmarksBar />
      <TrelloHeader />
      <main className={`flex min-h-0 flex-1 bg-[#00304e] ${boardFont}`}>
        <Board />
        <Sidebar />
      </main>
      <Taskbar />
      <SpeedWidget />
    </div>
  );
}
